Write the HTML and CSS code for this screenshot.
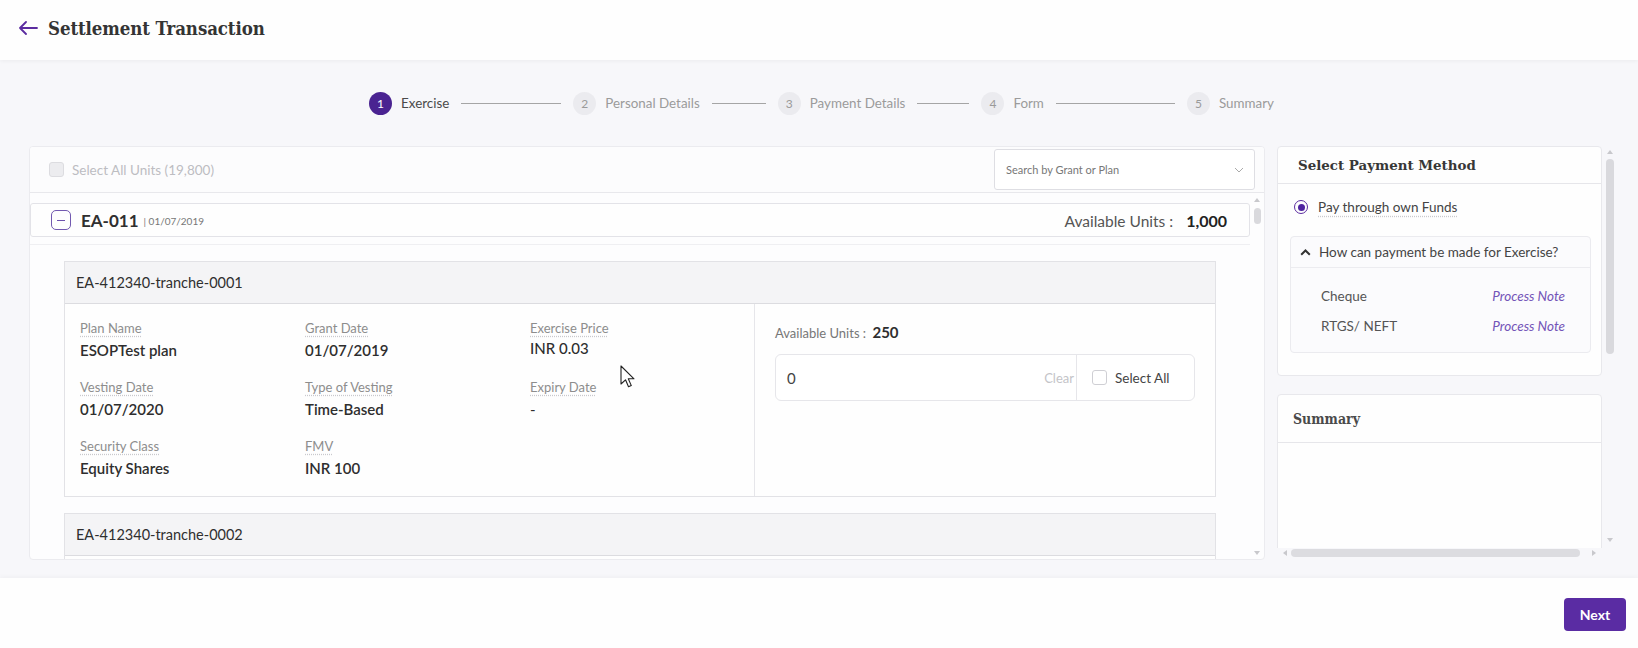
FILE: index.html
```html
<!DOCTYPE html>
<html lang="en">
<head>
<meta charset="utf-8">
<title>Settlement Transaction</title>
<link rel="stylesheet" href="styles.css">
</head>
<body>
<div class="app">
  <header class="topbar">
    <svg class="back" width="20" height="14" viewBox="0 0 20 14"><path d="M19 7H2M8 1L2 7l6 6" fill="none" stroke="#5b2ca0" stroke-width="1.8" stroke-linecap="round" stroke-linejoin="round"/></svg>
    <h1 class="title">Settlement Transaction</h1>
  </header>

  <nav class="stepper">
    <div class="step active"><span class="num">1</span><span class="step-label">Exercise</span></div>
    <span class="connector c1"></span>
    <div class="step"><span class="num">2</span><span class="step-label">Personal Details</span></div>
    <span class="connector c2"></span>
    <div class="step"><span class="num">3</span><span class="step-label">Payment Details</span></div>
    <span class="connector c3"></span>
    <div class="step"><span class="num">4</span><span class="step-label">Form</span></div>
    <span class="connector c4"></span>
    <div class="step"><span class="num">5</span><span class="step-label">Summary</span></div>
  </nav>

  <main class="content">
    <section class="units-panel">
      <div class="units-toolbar">
        <label class="check-all"><span class="checkbox disabled"></span><span>Select All Units (19,800)</span></label>
        <div class="search">
          <span>Search by Grant or Plan</span>
          <svg width="10" height="6" viewBox="0 0 10 6"><path d="M1 1l4 4 4-4" fill="none" stroke="#aaa" stroke-width="1"/></svg>
        </div>
      </div>
      <div class="units-body">
        <div class="units-scroll">
          <div class="grant-row">
            <div class="grant-left">
              <span class="collapse"><span class="bar"></span></span>
              <span class="grant-id">EA-011</span>
              <span class="grant-date">| 01/07/2019</span>
            </div>
            <div class="grant-right">Available Units : <strong>1,000</strong></div>
          </div>
          <div class="grant-content">
            <article class="tranche">
              <div class="tranche-head">EA-412340-tranche-0001</div>
              <div class="tranche-body">
                <div class="fields">
                  <div class="field"><span class="f-label">Plan Name</span><span class="f-value">ESOPTest plan</span></div>
                  <div class="field"><span class="f-label">Grant Date</span><span class="f-value">01/07/2019</span></div>
                  <div class="field"><span class="f-label">Exercise Price</span><span class="f-value up">INR 0.03</span></div>
                  <div class="field"><span class="f-label">Vesting Date</span><span class="f-value">01/07/2020</span></div>
                  <div class="field"><span class="f-label">Type of Vesting</span><span class="f-value">Time-Based</span></div>
                  <div class="field"><span class="f-label">Expiry Date</span><span class="f-value plain">-</span></div>
                  <div class="field"><span class="f-label">Security Class</span><span class="f-value">Equity Shares</span></div>
                  <div class="field"><span class="f-label">FMV</span><span class="f-value">INR 100</span></div>
                </div>
                <div class="exercise-box">
                  <div class="avail">Available Units : <strong>250</strong></div>
                  <div class="unit-input">
                    <div class="unit-field"><span class="unit-val">0</span><span class="clear">Clear</span></div>
                    <label class="unit-all"><span class="checkbox"></span><span>Select All</span></label>
                  </div>
                </div>
              </div>
            </article>
            <article class="tranche">
              <div class="tranche-head">EA-412340-tranche-0002</div>
              <div class="tranche-body"></div>
            </article>
          </div>
        </div>
        <div class="vscroll">
          <span class="arrow up"></span>
          <span class="thumb small"></span>
          <span class="spacer"></span>
          <span class="arrow down"></span>
        </div>
      </div>
    </section>

    <aside class="side">
      <div class="side-cards">
        <div class="card pay-card">
          <div class="card-head pay-head">Select Payment Method</div>
          <div class="pay-body">
            <label class="radio-row"><span class="radio"><span class="dot"></span></span><span class="dotted">Pay through own Funds</span></label>
            <div class="accordion">
              <div class="acc-head">
                <svg width="11" height="7" viewBox="0 0 11 7"><path d="M1.2 5.8L5.5 1.5l4.3 4.3" fill="none" stroke="#333" stroke-width="2"/></svg>
                <span>How can payment be made for Exercise?</span>
              </div>
              <div class="acc-body">
                <div class="acc-item"><span>Cheque</span><span class="note">Process Note</span></div>
                <div class="acc-item"><span>RTGS/ NEFT</span><span class="note">Process Note</span></div>
              </div>
            </div>
          </div>
        </div>
        <div class="card summary-card">
          <div class="card-head sum-head">Summary</div>
          <div class="sum-body"></div>
        </div>
      </div>
      <div class="vscroll side-v">
        <span class="arrow up"></span>
        <span class="thumb big"></span>
        <span class="spacer"></span>
        <span class="arrow down"></span>
      </div>
      <div class="hscroll">
        <span class="arrow left"></span>
        <span class="hthumb"></span>
        <span class="arrow right"></span>
      </div>
      <div class="corner"></div>
    </aside>
  </main>

  <footer class="footer">
    <button class="next" type="button">Next</button>
  </footer>

  <svg class="cursor" width="16" height="24" viewBox="0 0 16 24"><path d="M1 1v18l4.5-4.2 3 7 2.8-1.2-3-6.8H14z" fill="#fff" stroke="#222" stroke-width="1.1" stroke-linejoin="round"/></svg>
</div>
</body>
</html>
```

FILE: styles.css
```css
* { box-sizing: border-box; }
html, body { margin: 0; padding: 0; }
body {
  font-family: Lato, "Liberation Sans", sans-serif;
  background: #f7f7fa;
  color: #333;
  width: 1638px;
  height: 648px;
  overflow: hidden;
}
.app {
  position: relative;
  display: flex;
  flex-direction: column;
  height: 648px;
}

/* header */
.topbar {
  height: 60px;
  flex: none;
  background: #fefefe;
  display: flex;
  align-items: center;
  padding-left: 18px;
  padding-bottom: 4px;
  box-shadow: 0 1px 4px rgba(0, 0, 0, 0.05);
  position: relative;
  z-index: 1;
}
.back { margin-right: 10px; margin-top: -1px; }
.title {
  margin: 0;
  font-family: "DejaVu Serif", serif;
  font-stretch: condensed;
  font-weight: bold;
  font-size: 18.5px;
  color: #343434;
  letter-spacing: -0.1px;
}

/* stepper */
.stepper {
  height: 86px;
  flex: none;
  display: flex;
  align-items: center;
  justify-content: center;
  padding-left: 5px;
}
.step { display: flex; align-items: center; }
.num {
  width: 23px;
  height: 23px;
  border-radius: 50%;
  background: #ebebef;
  color: #9a9a9a;
  font-size: 12px;
  display: flex;
  align-items: center;
  justify-content: center;
  margin-right: 9px;
}
.step-label { font-size: 13.4px; color: #9b9b9b; }
.step.active .num { background: #4a2391; color: #fff; }
.step.active .step-label { color: #4a4a4a; }
.connector { height: 1px; background: #8e8e8e; margin: 0 12px; border-top: 0.5px solid #a5a5a5; }
.c1 { width: 100px; }
.c2 { width: 54px; }
.c3 { width: 52px; }
.c4 { width: 119px; }

/* main */
.content {
  height: 414px;
  flex: none;
  display: flex;
  gap: 12px;
  padding-left: 29px;
}
.units-panel {
  width: 1236px;
  height: 414px;
  background: #fdfdfe;
  border: 1px solid #ebebef;
  border-radius: 4px;
  display: flex;
  flex-direction: column;
  overflow: hidden;
}
.units-toolbar {
  height: 46px;
  flex: none;
  display: flex;
  align-items: center;
  justify-content: space-between;
  padding: 0 9px 0 19px;
  border-bottom: 1px solid #e8e8ec;
  background: #fcfcfd;
}
.check-all { display: flex; align-items: center; gap: 8px; font-size: 13.5px; color: #bdbdc2; }
.checkbox {
  width: 15px;
  height: 15px;
  border: 1px solid #cfcfd4;
  border-radius: 3px;
  background: #fff;
  display: inline-block;
  flex: none;
}
.checkbox.disabled { background: #ececef; border-color: #dcdce0; }
.search {
  width: 261px;
  height: 41px;
  border: 1px solid #dedee3;
  border-radius: 3px;
  background: #fff;
  display: flex;
  align-items: center;
  justify-content: space-between;
  padding: 0 10px 0 11px;
  font-size: 11px;
  color: #777;
}

.units-body { flex: 1; display: flex; min-height: 0; }
.units-scroll { width: 1220px; overflow: hidden; }
.grant-row {
  margin-top: 10px;
  height: 34px;
  border: 1px solid #e3e3e8;
  border-radius: 3px;
  background: #fefefe;
  display: flex;
  align-items: center;
  justify-content: space-between;
  padding: 0 22px 0 20px;
}
.grant-left { display: flex; align-items: center; }
.collapse {
  width: 20px;
  height: 20px;
  border: 1.5px solid #7259b0;
  border-radius: 5px;
  display: flex;
  align-items: center;
  justify-content: center;
  margin-right: 10px;
}
.collapse .bar { width: 8px; height: 1px; background: #6d52ad; }
.grant-id { font-size: 17px; font-weight: bold; color: #2f2f2f; margin-right: 5px; }
.grant-date { font-size: 10px; color: #777; margin-top: 1px; }
.grant-right { font-size: 15.5px; color: #555; }
.grant-right strong { color: #222; margin-left: 9px; font-size: 16px; }

.grant-content {
  margin-top: 7px;
  border-top: 1px solid #efeff2;
  padding: 16px 34px 0;
}
.tranche {
  border: 1px solid #e2e2e6;
  background: #fefefe;
  margin-bottom: 16px;
}
.tranche-head {
  height: 42px;
  background: #f4f4f6;
  border-bottom: 1px solid #dcdce0;
  display: flex;
  align-items: center;
  padding-left: 11px;
  font-size: 14.5px;
  color: #2f2f2f;
}
.tranche-body { display: flex; height: 192px; }
.fields {
  width: 690px;
  border-right: 1px solid #e6e6ea;
  display: grid;
  grid-template-columns: 225px 225px 1fr;
  grid-auto-rows: 40px;
  row-gap: 19px;
  padding: 16px 0 0 15px;
  align-content: start;
}
.field { display: flex; flex-direction: column; align-items: flex-start; gap: 4px; }
.f-label {
  font-size: 13px;
  line-height: 16px;
  color: #8d8d8d;
  text-decoration: underline dotted #c9c9cd;
  text-underline-offset: 3px;
}
.f-value { font-size: 15px; line-height: 20px; font-weight: 600; color: #2e2e2e; }
.f-value.up { margin-top: -2px; font-weight: 500; }
.f-value.plain { font-weight: normal; }

.exercise-box { flex: 1; padding: 18px 20px 0 20px; }
.avail { font-size: 13px; color: #777; line-height: 20px; }
.avail strong { font-size: 15px; color: #2e2e2e; margin-left: 3px; }
.unit-input {
  margin-top: 11px;
  height: 47px;
  border: 1px solid #e6e6ea;
  border-radius: 6px;
  display: flex;
  background: #fff;
}
.unit-field {
  flex: 1;
  display: flex;
  align-items: center;
  justify-content: space-between;
  padding: 0 2px 0 11px;
  border-right: 1px solid #e6e6ea;
}
.unit-val { font-size: 15px; color: #444; }
.clear { font-size: 13px; color: #c4c4c8; }
.unit-all { width: 117px; display: flex; align-items: center; gap: 8px; padding-left: 15px; font-size: 13.5px; color: #444; }

/* scrollbars */
.vscroll {
  width: 14px;
  flex: none;
  display: flex;
  flex-direction: column;
  align-items: center;
  padding: 5px 0 4px;
}
.spacer { flex: 1; }
.arrow { width: 0; height: 0; border: 3.5px solid transparent; }
.arrow.up { border-bottom: 4px solid #c8c8cc; border-top-width: 0; }
.arrow.down { border-top: 4px solid #c8c8cc; border-bottom-width: 0; }
.arrow.left { border-right: 4px solid #c8c8cc; border-left-width: 0; }
.arrow.right { border-left: 4px solid #c8c8cc; border-right-width: 0; }
.thumb { width: 7px; border-radius: 4px; background: #d9d9dd; }
.thumb.small { height: 16px; margin-top: 6px; }
.thumb.big { height: 195px; margin-top: 5px; }

/* side */
.side {
  width: 345px;
  height: 414px;
  display: grid;
  grid-template-columns: 325px 20px;
  grid-template-rows: 402px 12px;
}
.side-cards { overflow: hidden; }
.card {
  background: #fefefe;
  border: 1px solid #e8e8ec;
  border-radius: 4px;
}
.card-head {
  height: 37px;
  display: flex;
  align-items: center;
  padding-left: 20px;
  border-bottom: 1px solid #e6e6ea;
  font-family: "DejaVu Serif", serif;
  font-stretch: condensed;
  font-weight: bold;
  font-size: 13.5px;
  color: #373737;
}
.pay-head { font-stretch: normal; font-size: 13.4px; }
.pay-body { padding: 13px 10px 22px 12px; }
.radio-row { display: flex; align-items: center; height: 20px; gap: 10px; padding-left: 4px; font-size: 13.5px; color: #444; }
.radio {
  width: 14px;
  height: 14px;
  border-radius: 50%;
  border: 1.5px solid #5b2ca0;
  display: flex;
  align-items: center;
  justify-content: center;
}
.radio .dot { width: 7px; height: 7px; border-radius: 50%; background: #4f24a0; }
.dotted { text-decoration: underline dotted #cacace; text-underline-offset: 4px; }
.accordion {
  margin-top: 19px;
  border: 1px solid #ebebef;
  border-radius: 4px;
  background: #fbfbfd;
}
.acc-head {
  height: 31px;
  display: flex;
  align-items: center;
  gap: 8px;
  padding-left: 9px;
  border-bottom: 1px solid #ececf0;
  font-size: 13.5px;
  color: #444;
}
.acc-body { padding: 13px 25px 11px 30px; }
.acc-item {
  height: 30px;
  display: flex;
  align-items: center;
  justify-content: space-between;
  font-size: 13.5px;
  color: #555;
}
.note { font-style: italic; color: #7354b8; }
.summary-card { margin-top: 18px; height: 220px; }
.sum-head { height: 48px; padding-left: 15px; font-size: 14px; color: #4a4a4a; }

.side-v { width: 20px; padding: 4px 4px 6px 0; }
.side-v .thumb { width: 8px; }
.hscroll {
  display: flex;
  align-items: center;
  padding: 0 6px 2px 6px;
  gap: 4px;
}
.hthumb { flex: 1; height: 8px; border-radius: 4px; background: #dcdce0; margin: 0 8px 0 0; }

/* footer */
.footer {
  margin-top: 18px;
  height: 70px;
  flex: none;
  background: #fefefe;
  box-shadow: 0 -1px 5px rgba(0, 0, 0, 0.04);
  display: flex;
  justify-content: flex-end;
  align-items: flex-start;
  padding: 20px 12px 0 0;
}
.next {
  width: 62px;
  height: 33px;
  border: 0;
  border-radius: 4px;
  background: #5a2ca3;
  color: #fff;
  font-family: Lato, sans-serif;
  font-weight: bold;
  font-size: 14px;
}

.cursor { position: absolute; left: 620px; top: 365px; }
```
